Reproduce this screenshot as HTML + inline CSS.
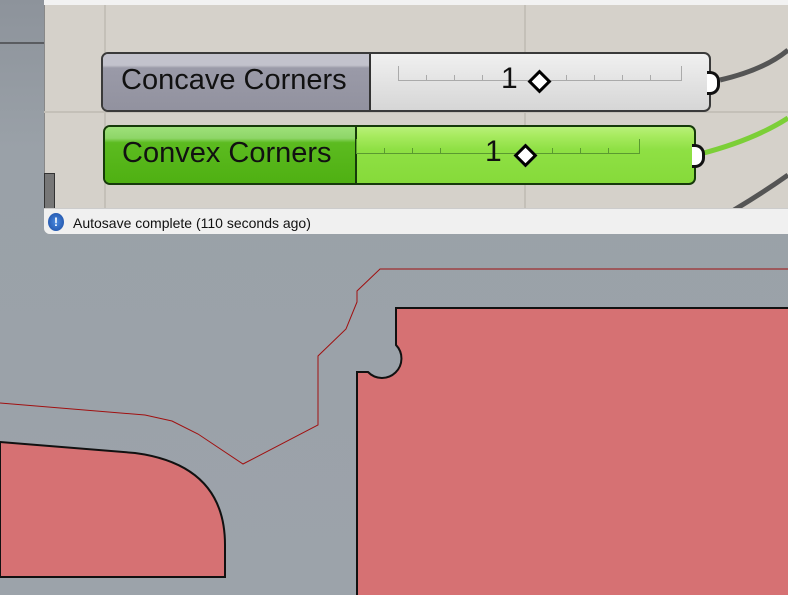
<!DOCTYPE html>
<html><head><meta charset="utf-8"><style>
body{margin:0;width:788px;height:595px;overflow:hidden;background:#9aa1a8;position:relative;font-family:"Liberation Sans",sans-serif}
.abs{position:absolute}
</style></head><body>
<svg class="abs" style="left:0;top:0" width="788" height="595">
<defs><linearGradient id="bg" x1="0" y1="0" x2="0" y2="1"><stop offset="0" stop-color="#8d939b"/><stop offset="0.25" stop-color="#9aa1a8"/><stop offset="1" stop-color="#9ca3aa"/></linearGradient></defs>
<rect width="788" height="595" fill="url(#bg)"/>
<line x1="0" y1="43" x2="44" y2="43" stroke="#222" stroke-width="1"/>
<polyline points="0,403 145,415 172,421 198,434 243,464 318,425 318,356 346,329 357,302 357,291 380,269 788,269" fill="none" stroke="#a01010" stroke-width="1"/>
<path d="M0,442 L135,453 Q225,465 225,545 L225,577 L0,577 Z" fill="#d67173" stroke="#111" stroke-width="2"/>
<path d="M790,308 L396,308 L396,345 A19,19 0 1 1 368,372 L357,372 L357,600 L790,600 Z" fill="#d67173" stroke="#111" stroke-width="2"/>
</svg>
<div class="abs" style="left:44px;top:0;width:744px;height:234px;background:#d5d1ca;border-bottom-left-radius:6px;overflow:hidden">
<div class="abs" style="left:0;top:0;width:744px;height:5px;background:#f2f2f2"></div>
<div class="abs" style="left:0;top:5px;width:1px;height:203px;background:#888"></div>
<div class="abs" style="left:60px;top:5px;width:2px;height:203px;background:#c4c0b8"></div>
<div class="abs" style="left:480px;top:5px;width:2px;height:203px;background:#c4c0b8"></div>
<div class="abs" style="left:0;top:111px;width:744px;height:2px;background:#c4c0b8"></div>
<div class="abs" style="left:0;top:173px;width:9px;height:34px;background:#777;border:1px solid #333"></div>
<svg class="abs" style="left:0;top:0" width="744" height="210">
<path d="M676,80 Q720,70 744,50" fill="none" stroke="#555" stroke-width="5"/>
<path d="M656,154 Q710,140 744,118" fill="none" stroke="#7ccf38" stroke-width="5"/>
<path d="M690,210 Q720,192 744,175" fill="none" stroke="#555" stroke-width="5"/>
</svg>
<!-- concave -->
<div class="abs" style="left:57px;top:52px;width:606px;height:56px;border:2px solid #3a3a3a;border-radius:7px;background:linear-gradient(#f0f0f0,#d6d6d6);overflow:hidden">
<div class="abs" style="left:0;top:0;width:266px;height:56px;background:linear-gradient(#c2c2cc 0,#c2c2cc 20%,#9a9aa8 25%,#92929f 100%);border-right:2px solid #333"></div>
<div class="abs" style="left:18px;top:10px;font-size:29px;color:#111">Concave Corners</div>
<svg class="abs" style="left:0;top:0" width="606" height="56"><g stroke="#aaa" stroke-width="1" fill="none">
<path d="M295.5,12v15M295.5,26.5h283M578.5,12v15M323.5,21v6M351.5,21v6M379.5,21v6M463.5,21v6M491.5,21v6M519.5,21v6M547.5,21v6"/></g></svg>
<div class="abs" style="left:398px;top:8px;font-size:30px;color:#111">1</div>
<div class="abs" style="left:428px;top:19px;width:11px;height:11px;background:#fff;border:3px solid #000;transform:rotate(45deg)"></div>
</div>
<div class="abs" style="left:663px;top:71px;width:10px;height:18px;background:#fff;border:3px solid #111;border-left:none;border-radius:0 10px 10px 0"></div>
<!-- convex -->
<div class="abs" style="left:59px;top:125px;width:589px;height:56px;border:2px solid #163a0a;border-radius:7px;background:linear-gradient(#b8f07a 0,#a8eb60 15%,#8fe044 40%,#86da3a 100%);overflow:hidden">
<div class="abs" style="left:0;top:0;width:250px;height:56px;background:linear-gradient(#9ee07a 0,#8ed668 20%,#5cbb20 28%,#4fb012 100%);border-right:2px solid #163a0a"></div>
<div class="abs" style="left:17px;top:10px;font-size:29px;color:#111">Convex Corners</div>
<svg class="abs" style="left:0;top:0" width="589" height="56"><g stroke="#5a9a30" stroke-width="1" fill="none">
<path d="M251.5,12v15M251.5,26.5h283M534.5,12v15M279.5,21v6M307.5,21v6M335.5,21v6M419.5,21v6M447.5,21v6M475.5,21v6M503.5,21v6"/></g></svg>
<div class="abs" style="left:380px;top:8px;font-size:30px;color:#111">1</div>
<div class="abs" style="left:412px;top:20px;width:11px;height:11px;background:#fff;border:3px solid #000;transform:rotate(45deg)"></div>
</div>
<div class="abs" style="left:648px;top:144px;width:10px;height:18px;background:#fff;border:3px solid #111;border-left:none;border-radius:0 10px 10px 0"></div>
<div class="abs" style="left:0;top:208px;width:744px;height:26px;background:#f0f0f0;border-top:1px solid #ccc"></div>
<div class="abs" style="left:4px;top:213px;width:16px;height:18px;border-radius:50%;background:radial-gradient(#4a8ae0,#1a4aa0);color:#fff;font-size:12px;font-weight:bold;text-align:center;line-height:18px">!</div>
<div class="abs" style="left:29px;top:215px;font-size:14px;color:#111">Autosave complete (110 seconds ago)</div>
</div>
</body></html>
